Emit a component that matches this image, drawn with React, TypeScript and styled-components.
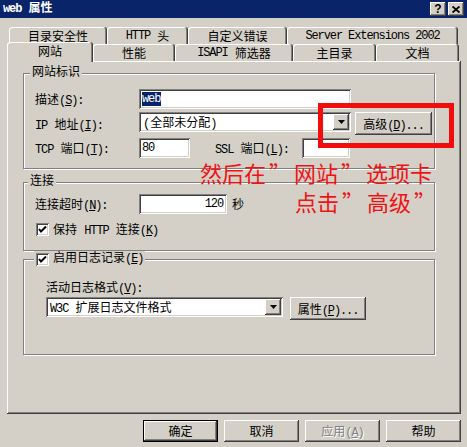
import React, { ReactNode } from 'react';
import styled, { createGlobalStyle, css } from 'styled-components';

const FACE = '#d4d0c8';
const SHADOW = '#808080';
const DARK = '#404040';
const NAVY = '#0a246a';
const FONT = '"Liberation Mono", "Noto Sans CJK SC", monospace';

const GlobalStyle = createGlobalStyle`
  html, body {
    margin: 0;
    padding: 0;
    background: ${FACE};
  }
  body {
    font-family: ${FONT};
    font-size: 12px;
    color: #000;
  }
  * {
    box-sizing: border-box;
  }
`;

const raised = css`
  box-shadow: inset -1px -1px ${DARK}, inset 1px 1px #fff, inset -2px -2px ${SHADOW},
    inset 2px 2px ${FACE};
`;

const sunken = css`
  box-shadow: inset 1px 1px ${SHADOW}, inset -1px -1px #fff, inset 2px 2px ${DARK},
    inset -2px -2px ${FACE};
`;

const Window = styled.div`
  position: relative;
  width: 467px;
  height: 447px;
  background: ${FACE};
  overflow: hidden;
  display: flex;
  flex-direction: column;
`;

const TitleBar = styled.div`
  height: 18px;
  background: ${NAVY};
  color: #fff;
  display: flex;
  align-items: center;
  padding: 0 3px;
  font-weight: bold;
`;

const Caption = styled.span`
  flex: 1;
  line-height: 18px;
`;

const CaptionButton = styled.span`
  width: 16px;
  height: 14px;
  margin-left: 2px;
  background: ${FACE};
  ${raised};
  display: flex;
  align-items: center;
  justify-content: center;
  color: #000;
  font: bold 12px 'Liberation Sans', sans-serif;
`;

// latin runs: narrow mono like the bitmap font in the dialog
const Lat = styled.span`
  letter-spacing: -1.1px;
`;

const Key = styled.u`
  text-underline-offset: 1px;
`;

const Mn = ({ k, colon }: { k: string; colon?: boolean }) => (
  <Lat>
    (<Key>{k}</Key>){colon ? ':' : ''}
  </Lat>
);

const TabStrip = styled.div`
  padding: 9px 0 0 9px;
`;

const TabRow = styled.div`
  display: flex;
  align-items: flex-start;
  height: 17px;
`;

const Tab = styled.div<{ $w: number; $active?: boolean }>`
  width: ${(p) => p.$w}px;
  height: 17px;
  flex: none;
  background: ${FACE};
  border-radius: 3px 3px 0 0;
  box-shadow: inset -1px 0 ${DARK}, inset 1px 1px #fff, inset -2px 0 ${SHADOW};
  display: flex;
  align-items: center;
  justify-content: center;
  white-space: pre;
  ${(p) =>
    p.$active &&
    css`
      position: relative;
      z-index: 1;
      height: 20px;
      margin: -2px 0 -1px -2px;
      padding-bottom: 3px;
    `}
`;

const Panel = styled.div`
  margin-left: 7px;
  width: 454px;
  height: 353px;
  padding: 4px 0 0 16px;
  box-shadow: inset -1px -1px ${DARK}, inset 1px 1px #fff, inset -2px -2px ${SHADOW};
  display: flex;
  flex-direction: column;
`;

const Group = styled.fieldset<{ $gap?: number }>`
  width: 412px;
  margin: ${(p) => p.$gap ?? 0}px 0 0;
  padding: 0;
  min-width: 0;
  border: 1px solid ${SHADOW};
  box-shadow: inset 1px 1px #fff, 1px 1px #fff;
`;

const Legend = styled.legend<{ $indent: number }>`
  margin-left: ${(p) => p.$indent}px;
  padding: 0 2px;
  line-height: 16px;
  height: 16px;
  background: ${FACE};
`;

const LegendInner = styled.span`
  display: flex;
  align-items: center;
  gap: 4px;
`;

const FormGrid = styled.div<{ $rows: string; $pad: string; $gap: number }>`
  display: grid;
  grid-template-columns: 104px auto;
  grid-template-rows: ${(p) => p.$rows};
  row-gap: ${(p) => p.$gap}px;
  align-items: center;
  padding: ${(p) => p.$pad};
`;

const Line = styled.div`
  display: flex;
  align-items: center;
`;

const TopLine = styled(Line)`
  align-items: flex-start;
`;

const WideLine = styled(Line)`
  grid-column: 1 / span 2;
  padding-left: 1px;
  gap: 4px;
`;

const Label = styled.span<{ $w?: number; $ml?: number }>`
  white-space: pre;
  ${(p) => p.$w && `width: ${p.$w}px;`}
  margin-left: ${(p) => p.$ml ?? 0}px;
`;

const Field = styled.div<{ $w: number; $right?: boolean; $ml?: number }>`
  width: ${(p) => p.$w}px;
  height: 20px;
  flex: none;
  margin-left: ${(p) => p.$ml ?? 0}px;
  background: #fff;
  ${sunken};
  padding: 2px 4px 2px 3px;
  display: flex;
  align-items: center;
  justify-content: ${(p) => (p.$right ? 'flex-end' : 'flex-start')};
  white-space: pre;
`;

const Selected = styled.span`
  background: ${NAVY};
  color: #fff;
  line-height: 14px;
  padding-right: 1px;
`;

const Combo = styled.div<{ $w: number }>`
  width: ${(p) => p.$w}px;
  height: 20px;
  flex: none;
  background: #fff;
  ${sunken};
  padding: 2px;
  display: flex;
  align-items: center;
  white-space: pre;
`;

const ComboText = styled.span`
  flex: 1;
  padding-left: 2px;
`;

const DropButton = styled.span`
  width: 16px;
  height: 16px;
  background: ${FACE};
  ${raised};
  display: flex;
  align-items: center;
  justify-content: center;
`;

const PushButton = styled.button<{ $w: number; $h?: number; $ml?: number; $default?: boolean }>`
  width: ${(p) => p.$w}px;
  height: ${(p) => p.$h ?? 23}px;
  flex: none;
  margin: 0 0 0 ${(p) => p.$ml ?? 0}px;
  padding: 0;
  border: 0;
  background: ${FACE};
  ${raised};
  font: inherit;
  color: #000;
  white-space: pre;
  ${(p) =>
    p.$default &&
    css`
      box-shadow: inset 0 0 0 1px #000, inset -2px -2px ${DARK}, inset 2px 2px #fff,
        inset -3px -3px ${SHADOW};
    `}
  &:disabled {
    color: ${SHADOW};
    text-shadow: 1px 1px #fff;
  }
`;

const Check = styled.span`
  width: 13px;
  height: 13px;
  flex: none;
  background: #fff;
  ${sunken};
  display: flex;
  align-items: center;
  justify-content: center;
`;

const LogBody = styled.div`
  display: flex;
  flex-direction: column;
  gap: 1px;
  padding: 11px 0 34px 22px;
`;

const DialogButtons = styled.div`
  display: flex;
  justify-content: flex-end;
  gap: 6px;
  margin-top: 6px;
  padding-right: 6px;
`;

const Highlight = styled.div`
  position: absolute;
  left: 318px;
  top: 103px;
  width: 136px;
  height: 45px;
  border: 5px solid #f40c0c;
  pointer-events: none;
`;

const Callout = styled.div`
  position: absolute;
  left: 200px;
  top: 158px;
  color: #ee1414;
  font: 22px/29px 'Noto Sans CJK SC', sans-serif;
  white-space: nowrap;
  pointer-events: none;
`;

const CalloutLine = styled.div<{ $indent: number }>`
  padding-left: ${(p) => p.$indent}px;
`;

const Quote = styled.span`
  display: inline-block;
  width: 28px;
  padding-left: 3px;
`;

const Arrow = () => (
  <svg width="7" height="4" viewBox="0 0 7 4">
    <polygon points="0,0 7,0 3.5,4" fill="#000" />
  </svg>
);

const Tick = () => (
  <svg width="9" height="9" viewBox="0 0 9 9">
    <polyline points="1,4 3,6.5 8,1.5" fill="none" stroke="#000" strokeWidth="2" />
  </svg>
);

const Cross = () => (
  <svg width="8" height="7" viewBox="0 0 8 7">
    <path d="M0.5 0.5 L7.5 6.5 M7.5 0.5 L0.5 6.5" stroke="#000" strokeWidth="1.8" />
  </svg>
);

const backTabs: { key: string; label: ReactNode; w: number }[] = [
  { key: 'security', label: '目录安全性', w: 98 },
  {
    key: 'http',
    label: (
      <>
        <Lat>HTTP</Lat> 头
      </>
    ),
    w: 81,
  },
  { key: 'errors', label: '自定义错误', w: 99 },
  { key: 'ext', label: <Lat>Server Extensions 2002</Lat>, w: 171 },
];

const frontTabs: { key: string; label: ReactNode; w: number; active?: boolean }[] = [
  { key: 'site', label: '网站', w: 86, active: true },
  { key: 'perf', label: '性能', w: 82 },
  {
    key: 'isapi',
    label: (
      <>
        <Lat>ISAPI</Lat> 筛选器
      </>
    ),
    w: 118,
  },
  { key: 'home', label: '主目录', w: 83 },
  { key: 'docs', label: '文档', w: 83 },
];

export default function App() {
  return (
    <>
      <GlobalStyle />
      <Window>
        <TitleBar>
          <Caption>
            <Lat>web</Lat> 属性
          </Caption>
          <CaptionButton>?</CaptionButton>
          <CaptionButton>
            <Cross />
          </CaptionButton>
        </TitleBar>

        <TabStrip>
          <TabRow>
            {backTabs.map((t) => (
              <Tab key={t.key} $w={t.w}>
                {t.label}
              </Tab>
            ))}
          </TabRow>
          <TabRow>
            {frontTabs.map((t) => (
              <Tab key={t.key} $w={t.w} $active={t.active}>
                {t.label}
              </Tab>
            ))}
          </TabRow>
        </TabStrip>

        <Panel>
          <Group>
            <Legend $indent={6}>网站标识</Legend>
            <FormGrid $rows="20px 23px 20px" $pad="8px 0 10px 11px" $gap={3}>
              <Label>
                描述<Mn k="S" colon />
              </Label>
              <Field $w={212}>
                <Selected>
                  <Lat>web</Lat>
                </Selected>
              </Field>

              <Label>
                <Lat>IP</Lat> 地址<Mn k="I" colon />
              </Label>
              <TopLine>
                <Combo $w={212}>
                  <ComboText>(全部未分配)</ComboText>
                  <DropButton>
                    <Arrow />
                  </DropButton>
                </Combo>
                <PushButton $w={77} $ml={4}>
                  高级<Mn k="D" />
                  <Lat>...</Lat>
                </PushButton>
              </TopLine>

              <Label>
                <Lat>TCP</Lat> 端口<Mn k="T" colon />
              </Label>
              <Line>
                <Field $w={51}>
                  <Lat>80</Lat>
                </Field>
                <Label $w={87} $ml={25}>
                  <Lat>SSL</Lat> 端口<Mn k="L" colon />
                </Label>
                <Field $w={48} />
              </Line>
            </FormGrid>
          </Group>

          <Group $gap={5}>
            <Legend $indent={4}>连接</Legend>
            <FormGrid $rows="20px 16px" $pad="4px 0 13px 11px" $gap={7}>
              <Label>
                连接超时<Mn k="N" colon />
              </Label>
              <Line>
                <Field $w={88} $right>
                  <Lat>120</Lat>
                </Field>
                <Label $ml={5}>秒</Label>
              </Line>
              <WideLine>
                <Check>
                  <Tick />
                </Check>
                <Label>
                  保持 <Lat>HTTP</Lat> 连接<Mn k="K" />
                </Label>
              </WideLine>
            </FormGrid>
          </Group>

          <Group>
            <Legend $indent={10}>
              <LegendInner>
                <Check>
                  <Tick />
                </Check>
                <Label>
                  启用日志记录<Mn k="E" />
                </Label>
              </LegendInner>
            </Legend>
            <LogBody>
              <Label>
                活动日志格式<Mn k="V" colon />
              </Label>
              <TopLine>
                <Combo $w={237}>
                  <ComboText>
                    <Lat>W3C</Lat> 扩展日志文件格式
                  </ComboText>
                  <DropButton>
                    <Arrow />
                  </DropButton>
                </Combo>
                <PushButton $w={76} $ml={7}>
                  属性<Mn k="P" />
                  <Lat>...</Lat>
                </PushButton>
              </TopLine>
            </LogBody>
          </Group>
        </Panel>

        <DialogButtons>
          <PushButton $w={75} $h={22} $default>
            确定
          </PushButton>
          <PushButton $w={75} $h={22}>
            取消
          </PushButton>
          <PushButton $w={75} $h={22} disabled>
            应用<Mn k="A" />
          </PushButton>
          <PushButton $w={75} $h={22}>
            帮助
          </PushButton>
        </DialogButtons>

        <Highlight />
        <Callout>
          <CalloutLine $indent={0}>
            然后在<Quote>”</Quote>网站<Quote>”</Quote>选项卡
          </CalloutLine>
          <CalloutLine $indent={95}>
            点击<Quote>”</Quote>高级<Quote>”</Quote>
          </CalloutLine>
        </Callout>
      </Window>
    </>
  );
}
